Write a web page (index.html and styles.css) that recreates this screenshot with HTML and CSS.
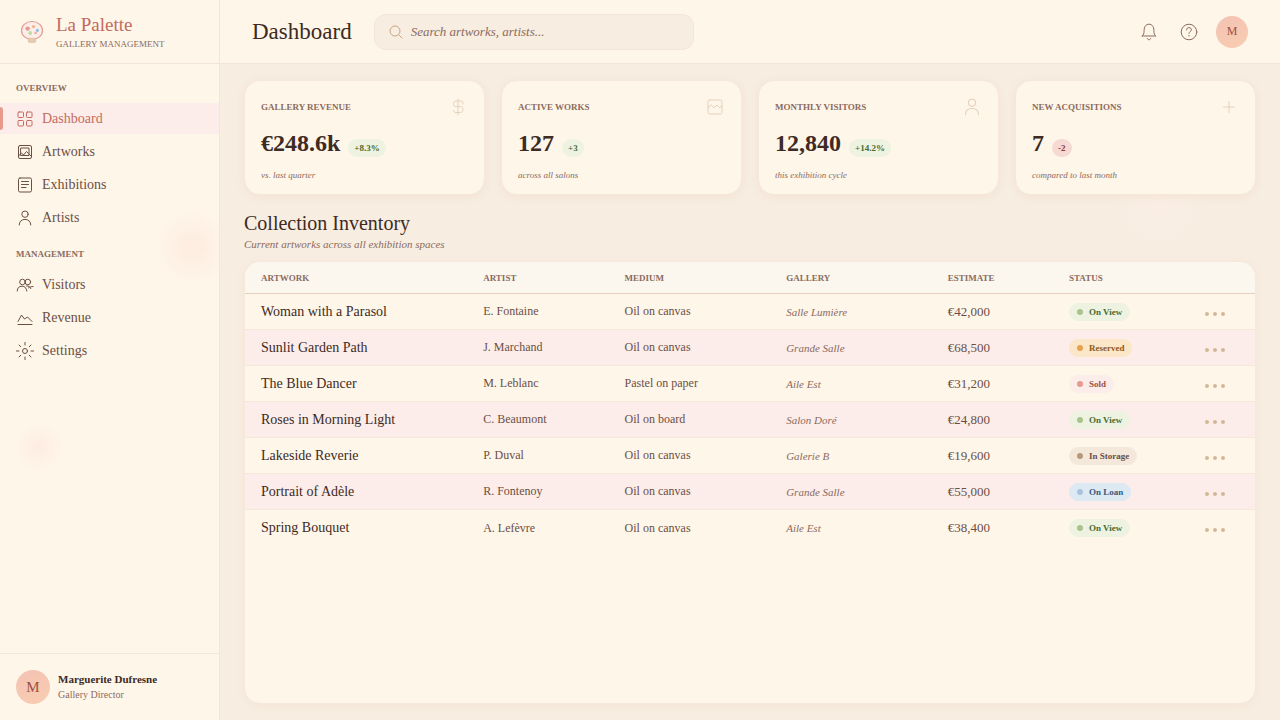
FILE: index.html
```html
<!DOCTYPE html>
<html lang="en">
<head>
    <meta charset="UTF-8">
    <meta name="viewport" content="width=device-width, initial-scale=1.0">
    <title>La Palette - Dashboard</title>
    <link rel="stylesheet" href="styles.css">
</head>
<body>
    <!-- shared icons -->
    <svg class="sprite" aria-hidden="true">
        <symbol id="user" viewBox="0 0 18 18">
            <circle cx="9" cy="5.2" r="3.2"/>
            <path d="M3.2 16c0-3.6 2.4-5.600 5.800-5.600s5.800 2 5.800 5.600"/>
        </symbol>
        <symbol id="dots" viewBox="0 0 20 4">
            <circle cx="2" cy="2" r="2"/><circle cx="10" cy="2" r="2"/><circle cx="18" cy="2" r="2"/>
        </symbol>
    </svg>

    <div class="app">
        <aside class="sidebar">
            <div class="brand">
                <svg class="logo" viewBox="0 0 32 32">
                    <ellipse cx="16" cy="14.5" rx="10.5" ry="9" fill="#FCEEEA" stroke="#E8998D" stroke-width="1.2"/>
                    <circle cx="11.6" cy="12.6" r="2.2" fill="#E8998D"/>
                    <circle cx="17.5" cy="10.6" r="1.7" fill="#F4B48C"/>
                    <circle cx="21.4" cy="14.4" r="1.6" fill="#93BEDD"/>
                    <circle cx="14.2" cy="17" r="2" fill="#C0DDA8"/>
                    <circle cx="19.6" cy="17" r="1.3" fill="#EFA99D"/>
                    <rect x="12.3" y="22.2" width="7.4" height="4.3" rx="1" fill="#E2CBAE" stroke="#D4B896" stroke-width="0.5"/>
                </svg>
                <div>
                    <div class="brand-name">La Palette</div>
                    <div class="brand-sub">GALLERY MANAGEMENT</div>
                </div>
            </div>

            <nav class="nav">
                <div class="nav-title">OVERVIEW</div>
                <a href="#" class="nav-item active">
                    <svg class="icon" viewBox="0 0 18 18"><rect x="2" y="2" width="5.5" height="5.5" rx="1"/><rect x="10.5" y="2" width="5.5" height="5.5" rx="1"/><rect x="2" y="10.5" width="5.5" height="5.5" rx="1"/><rect x="10.5" y="10.5" width="5.5" height="5.5" rx="1"/></svg>
                    Dashboard
                </a>
                <a href="#" class="nav-item">
                    <svg class="icon" viewBox="0 0 18 18"><rect x="2.5" y="2.5" width="13" height="13" rx="1.5"/><rect x="5" y="5" width="8" height="7.5"/><path d="M2.5 13l3-3 2 2 3-3.5 2 2 3 3"/></svg>
                    Artworks
                </a>
                <a href="#" class="nav-item">
                    <svg class="icon" viewBox="0 0 18 18"><rect x="2.5" y="2" width="13" height="14" rx="1.5"/><path d="M5.5 5.5h7M5.5 8.5h7M5.5 11.5h4.5"/></svg>
                    Exhibitions
                </a>
                <a href="#" class="nav-item">
                    <svg class="icon"><use href="#user"/></svg>
                    Artists
                </a>
                <div class="nav-title">MANAGEMENT</div>
                <a href="#" class="nav-item">
                    <svg class="icon" viewBox="0 0 18 18"><circle cx="6.5" cy="6" r="2.8"/><circle cx="11.8" cy="6" r="2.8"/><path d="M1.2 15c0-3 1.8-4.800 4.800-4.800 2.600 0 4.600 1.800 4.800 4.800M10.500 10c2.200-.5 3.600.8 4.300 2.600M12.500 11.800c1-.8 2.500-1.200 4.500-1.300"/></svg>
                    Visitors
                </a>
                <a href="#" class="nav-item">
                    <svg class="icon" viewBox="0 0 18 18"><path d="M2 12.500L5.500 6l3 4 3-2 4.500 4.500M2 15.500h14"/></svg>
                    Revenue
                </a>
                <a href="#" class="nav-item">
                    <svg class="icon" viewBox="0 0 18 18"><circle cx="9" cy="9" r="2.500"/><path d="M9 .5v2.500M9 15v2.500M.5 9h2.500M15 9h2.500M3 3l1.800 1.800M13.200 13.200L15 15M3 15l1.800-1.800M13.200 4.800L15 3"/></svg>
                    Settings
                </a>
            </nav>

            <div class="profile">
                <div class="avatar avatar-lg">M</div>
                <div>
                    <div class="profile-name">Marguerite Dufresne</div>
                    <div class="profile-role">Gallery Director</div>
                </div>
            </div>
        </aside>

        <div class="content">
            <header class="topbar">
                <h1>Dashboard</h1>
                <label class="search">
                    <svg class="search-icon" viewBox="0 0 14 14"><circle cx="6" cy="6" r="5"/><path d="M9.700 9.700L13.300 13.300"/></svg>
                    <input type="text" placeholder="Search artworks, artists..." aria-label="Search">
                </label>
                <div class="actions">
                    <button class="icon-btn" aria-label="Notifications">
                        <svg class="icon" viewBox="0 0 18 18"><path d="M2.200 13h13.600c-1.400-1-1.900-2.600-1.900-5.500C13.900 3.500 12 1.200 9 1.200S4.100 3.500 4.100 7.500c0 2.900-.5 4.500-1.900 5.500zM7.300 15.500c.3.900.9 1.200 1.700 1.200s1.400-.3 1.700-1.200"/></svg>
                    </button>
                    <button class="icon-btn" aria-label="Help">
                        <svg class="icon" viewBox="0 0 18 18"><circle cx="9" cy="9" r="7.800"/><path d="M6.600 7c0-1.500 1-2.400 2.400-2.400s2.400.9 2.400 2.200c0 1.600-2.400 1.700-2.400 3.500M9 12.400v.6"/></svg>
                    </button>
                    <div class="avatar">M</div>
                </div>
            </header>

            <main class="main">
                <section class="stats">
                    <div class="stat">
                        <div class="stat-head">GALLERY REVENUE <svg class="icon" viewBox="0 0 20 20"><path d="M10 2v16M15 7V5.800C15 4.800 14.200 4 13 4H8C6.500 4 5.500 5 5.500 6.800S6.500 9.600 8 9.600h4.500c1.600 0 2.500 1 2.500 2.900s-1 3-2.500 3H8c-1.600 0-2.500-.8-2.500-2"/></svg></div>
                        <div class="stat-row"><span class="stat-value">€248.6k</span><span class="change up">+8.3%</span></div>
                        <div class="stat-note">vs. last quarter</div>
                    </div>
                    <div class="stat">
                        <div class="stat-head">ACTIVE WORKS <svg class="icon" viewBox="0 0 20 20"><rect x="3" y="3" width="14" height="14" rx="1.500"/><path d="M3 11l3.200-3 3 2.800L12 8l2.500 2.500L17 9.200"/></svg></div>
                        <div class="stat-row"><span class="stat-value">127</span><span class="change up">+3</span></div>
                        <div class="stat-note">across all salons</div>
                    </div>
                    <div class="stat">
                        <div class="stat-head">MONTHLY VISITORS <svg class="icon"><use href="#user"/></svg></div>
                        <div class="stat-row"><span class="stat-value">12,840</span><span class="change up">+14.2%</span></div>
                        <div class="stat-note">this exhibition cycle</div>
                    </div>
                    <div class="stat">
                        <div class="stat-head">NEW ACQUISITIONS <svg class="icon" viewBox="0 0 20 20"><path d="M10 4.500v11M4.500 10h11"/></svg></div>
                        <div class="stat-row"><span class="stat-value">7</span><span class="change down">-2</span></div>
                        <div class="stat-note">compared to last month</div>
                    </div>
                </section>

                <div class="section-head">
                    <h2>Collection Inventory</h2>
                    <p>Current artworks across all exhibition spaces</p>
                </div>

                <div class="table-card">
                    <table>
                        <thead>
                            <tr>
                                <th class="w22">ARTWORK</th>
                                <th class="w14">ARTIST</th>
                                <th class="w16">MEDIUM</th>
                                <th class="w16">GALLERY</th>
                                <th class="w12">ESTIMATE</th>
                                <th class="w12">STATUS</th>
                                <th class="w8"></th>
                            </tr>
                        </thead>
                        <tbody>
                            <tr>
                                <td class="title">Woman with a Parasol</td><td>E. Fontaine</td><td>Oil on canvas</td><td class="gallery">Salle Lumière</td><td class="price">€42,000</td>
                                <td><span class="status view">On View</span></td>
                                <td class="more"><button aria-label="More"><svg><use href="#dots"/></svg></button></td>
                            </tr>
                            <tr>
                                <td class="title">Sunlit Garden Path</td><td>J. Marchand</td><td>Oil on canvas</td><td class="gallery">Grande Salle</td><td class="price">€68,500</td>
                                <td><span class="status reserved">Reserved</span></td>
                                <td class="more"><button aria-label="More"><svg><use href="#dots"/></svg></button></td>
                            </tr>
                            <tr>
                                <td class="title">The Blue Dancer</td><td>M. Leblanc</td><td>Pastel on paper</td><td class="gallery">Aile Est</td><td class="price">€31,200</td>
                                <td><span class="status sold">Sold</span></td>
                                <td class="more"><button aria-label="More"><svg><use href="#dots"/></svg></button></td>
                            </tr>
                            <tr>
                                <td class="title">Roses in Morning Light</td><td>C. Beaumont</td><td>Oil on board</td><td class="gallery">Salon Doré</td><td class="price">€24,800</td>
                                <td><span class="status view">On View</span></td>
                                <td class="more"><button aria-label="More"><svg><use href="#dots"/></svg></button></td>
                            </tr>
                            <tr>
                                <td class="title">Lakeside Reverie</td><td>P. Duval</td><td>Oil on canvas</td><td class="gallery">Galerie B</td><td class="price">€19,600</td>
                                <td><span class="status storage">In Storage</span></td>
                                <td class="more"><button aria-label="More"><svg><use href="#dots"/></svg></button></td>
                            </tr>
                            <tr>
                                <td class="title">Portrait of Adèle</td><td>R. Fontenoy</td><td>Oil on canvas</td><td class="gallery">Grande Salle</td><td class="price">€55,000</td>
                                <td><span class="status loan">On Loan</span></td>
                                <td class="more"><button aria-label="More"><svg><use href="#dots"/></svg></button></td>
                            </tr>
                            <tr>
                                <td class="title">Spring Bouquet</td><td>A. Lefèvre</td><td>Oil on canvas</td><td class="gallery">Aile Est</td><td class="price">€38,400</td>
                                <td><span class="status view">On View</span></td>
                                <td class="more"><button aria-label="More"><svg><use href="#dots"/></svg></button></td>
                            </tr>
                        </tbody>
                    </table>
                </div>
            </main>
        </div>
    </div>
</body>
</html>
```
FILE: styles.css
```css
* {
    box-sizing: border-box;
    margin: 0;
    padding: 0;
}
body {
    font-family: "Liberation Serif", serif;
    color: #3D2B24;
    background: #F7EDE1;
}
button, input {
    font-family: inherit;
    border: none;
    background: none;
}
.sprite {
    display: none;
}
.icon {
    width: 18px;
    height: 18px;
    flex-shrink: 0;
    fill: none;
    stroke: currentColor;
    stroke-width: 1;
    stroke-linecap: round;
    stroke-linejoin: round;
}
.app {
    display: flex;
    min-height: 100vh;
}

/* sidebar */
.sidebar {
    width: 220px;
    flex-shrink: 0;
    display: flex;
    flex-direction: column;
    border-right: 1px solid #F3E6D8;
    background:
        radial-gradient(circle at 193px 247px, #FDEBDF, rgba(253, 235, 223, 0) 40px),
        radial-gradient(circle at 39px 447px, #FDECE1, rgba(253, 236, 225, 0) 26px),
        #FFF6EA;
}
.brand {
    display: flex;
    align-items: center;
    gap: 8px;
    height: 64px;
    padding: 0 16px;
    border-bottom: 1px solid #F3E6D8;
}
.logo {
    width: 32px;
    height: 32px;
}
.brand-name {
    font-size: 19px;
    line-height: 24px;
    color: #C46B5E;
}
.brand-sub {
    font-size: 9px;
    line-height: 14px;
    color: #8B6B5E;
}
.nav {
    flex: 1;
    padding-top: 16px;
}
.nav-title {
    padding: 0 16px;
    margin-bottom: 7px;
    font-size: 9px;
    line-height: 16px;
    font-weight: bold;
    color: #8B6B5E;
}
.nav-item + .nav-title {
    margin-top: 13px;
}
.nav-item {
    display: flex;
    align-items: center;
    gap: 8px;
    position: relative;
    height: 31px;
    margin-bottom: 2px;
    padding: 0 16px;
    font-size: 14px;
    color: #6B4F43;
    text-decoration: none;
}
.nav-item.active {
    background: #FCEDEA;
    color: #C46B5E;
}
.nav-item.active::before {
    content: "";
    position: absolute;
    left: 0;
    top: 4px;
    bottom: 4px;
    width: 3px;
    border-radius: 0 3px 3px 0;
    background: #E8998D;
}
.profile {
    display: flex;
    align-items: center;
    gap: 8px;
    padding: 16px;
    border-top: 1px solid #F3E6D8;
}
.avatar {
    display: flex;
    align-items: center;
    justify-content: center;
    width: 32px;
    height: 32px;
    border-radius: 50%;
    background: linear-gradient(160deg, #F4C2B4, #F8CDB0);
    color: #A0503F;
    font-size: 12px;
}
.avatar-lg {
    width: 34px;
    height: 34px;
    font-size: 15px;
}
.profile-name {
    font-size: 11px;
    line-height: 16px;
    font-weight: bold;
}
.profile-role {
    font-size: 10px;
    line-height: 16px;
    color: #8B6B5E;
}

/* top bar */
.content {
    flex: 1;
    min-width: 0;
    display: flex;
    flex-direction: column;
}
.topbar {
    display: flex;
    align-items: center;
    gap: 22px;
    height: 64px;
    padding: 0 32px;
    background: #FFF6EA;
    border-bottom: 1px solid #F3E6D8;
}
h1 {
    font-size: 23px;
    font-weight: normal;
}
.search {
    display: flex;
    align-items: center;
    gap: 8px;
    width: 320px;
    height: 36px;
    padding: 0 14px;
    border: 1px solid #F3E6D8;
    border-radius: 12px;
    background: #F7EDE1;
}
.search-icon {
    width: 14px;
    height: 14px;
    fill: none;
    stroke: #C9A585;
}
.search input {
    flex: 1;
    font-size: 13px;
    font-style: italic;
    color: #3D2B24;
    outline: none;
}
.search input::placeholder {
    color: #8B6B5E;
}
.actions {
    display: flex;
    align-items: center;
    gap: 4px;
    margin-left: auto;
}
.actions .avatar {
    margin-left: 5px;
}
.icon-btn {
    display: flex;
    align-items: center;
    justify-content: center;
    width: 36px;
    height: 36px;
    color: #8B6B5E;
    cursor: pointer;
}

/* main */
.main {
    flex: 1;
    display: flex;
    flex-direction: column;
    padding: 16px 24px;
    background: radial-gradient(circle at 938px 142px, #FAEEE4, rgba(250, 238, 228, 0) 50px);
}
.stats {
    display: grid;
    grid-template-columns: repeat(4, 1fr);
    gap: 16px;
}
.stat {
    padding: 16px 16px 12px;
    background: #FFF6EA;
    border: 1px solid #F6E9DC;
    border-radius: 16px;
    box-shadow: 0 2px 8px rgba(220, 150, 120, 0.12);
}
.stat-head {
    display: flex;
    align-items: center;
    justify-content: space-between;
    font-size: 9px;
    font-weight: bold;
    color: #8B6B5E;
}
.stat-head .icon {
    width: 20px;
    height: 20px;
    color: #E6D1BA;
}
.stat-row {
    display: flex;
    align-items: center;
    gap: 8px;
    margin: 10px 0;
}
.stat-value {
    font-size: 24px;
    line-height: 32px;
    font-weight: bold;
}
.change {
    margin-top: 10px;
    padding: 0 6px;
    border-radius: 9px;
    font-size: 9px;
    line-height: 18px;
    font-weight: bold;
}
.up {
    background: #EDF3E0;
    color: #4A6B35;
}
.down {
    background: #F7D9D4;
    color: #8B3A32;
}
.stat-note {
    font-size: 9px;
    line-height: 13px;
    font-style: italic;
    color: #8B6B5E;
}
.section-head {
    margin: 15px 0 9px;
}
h2 {
    font-size: 20px;
    line-height: 26px;
    font-weight: normal;
}
.section-head p {
    font-size: 11px;
    line-height: 16px;
    font-style: italic;
    color: #8B6B5E;
}

/* table */
.table-card {
    flex: 1;
    overflow: hidden;
    background: #FFF6EA;
    border: 1px solid #F6E9DC;
    border-radius: 16px;
    box-shadow: 0 2px 8px rgba(220, 150, 120, 0.08);
}
table {
    width: 100%;
    table-layout: fixed;
    border-spacing: 0;
}
th, td {
    padding: 0 16px;
    text-align: left;
    vertical-align: middle;
    white-space: nowrap;
}
th {
    height: 32px;
    font-size: 9px;
    color: #8B6B5E;
    background: #FBF7EE;
    border-bottom: 1px solid #E4D0BC;
}
.w22 { width: 22%; }
.w16 { width: 16%; }
.w14 { width: 14%; }
.w12 { width: 12%; }
.w8 { width: 8%; }
td {
    height: 36px;
    font-size: 12px;
    color: #6B4F43;
    border-bottom: 1px solid #F5E8DA;
}
tbody tr:nth-child(even) {
    background: #FCEDEA;
}
tbody tr:last-child td {
    border-bottom: none;
}
.title {
    font-size: 14px;
    color: #3D2B24;
}
.gallery {
    font-size: 11px;
    font-style: italic;
    color: #8B6B5E;
}
.price {
    font-size: 13px;
}
.status {
    display: inline-flex;
    align-items: center;
    gap: 6px;
    padding: 0 8px;
    border-radius: 9px;
    font-size: 9px;
    line-height: 18px;
    font-weight: bold;
    vertical-align: middle;
}
.status::before {
    content: "";
    width: 6px;
    height: 6px;
    border-radius: 50%;
}
.view { background: #EDF3E0; color: #4A6B35; }
.view::before { background: #A8C48A; }
.reserved { background: #FBE6C8; color: #8B5A1E; }
.reserved::before { background: #E5A050; }
.sold { background: #FCEDEA; color: #A0503F; }
.sold::before { background: #E8998D; }
.storage { background: #F3E8DA; color: #6B4F43; }
.storage::before { background: #B8977A; }
.loan { background: #DDE9F3; color: #3A5A78; }
.loan::before { background: #A8C4DC; }
.more {
    text-align: center;
}
.more button {
    cursor: pointer;
}
.more svg {
    width: 20px;
    height: 4px;
    fill: #D4B896;
}
```
